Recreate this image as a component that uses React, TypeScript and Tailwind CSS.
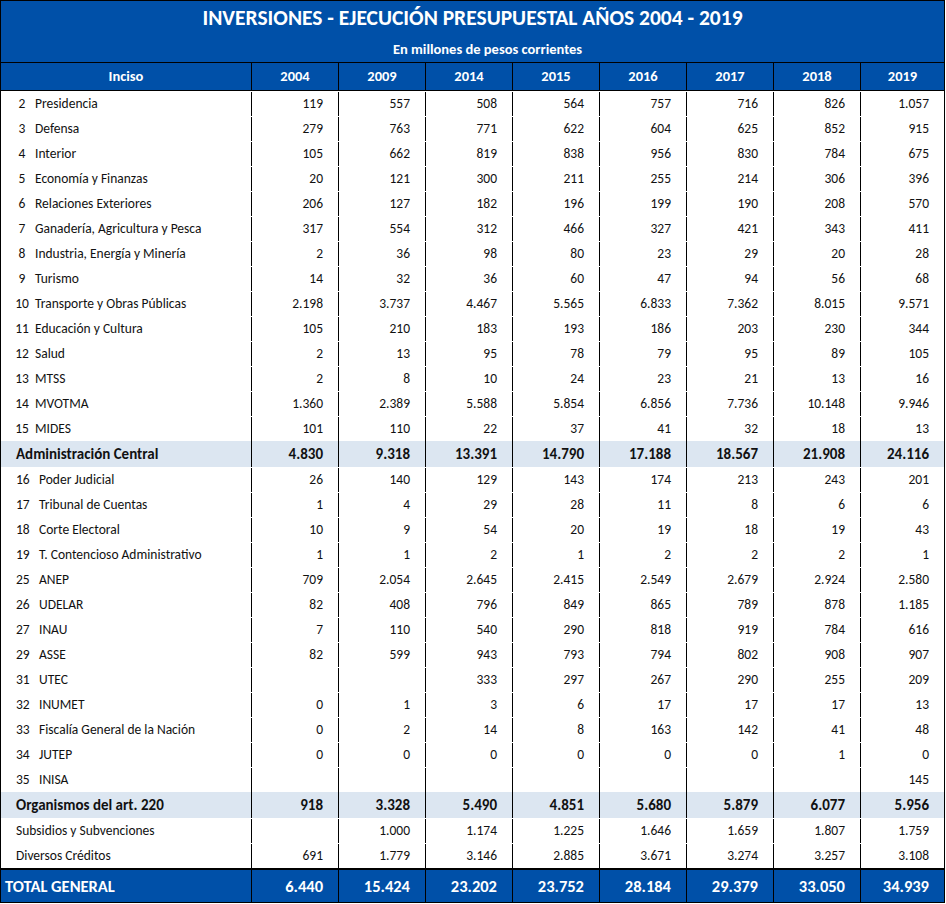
import React from "react";

type Row = { n?: string; name: string; v: string[] };

const sec1: Row[] = [
  { n: "2", name: "Presidencia", v: ["119", "557", "508", "564", "757", "716", "826", "1.057"] },
  { n: "3", name: "Defensa", v: ["279", "763", "771", "622", "604", "625", "852", "915"] },
  { n: "4", name: "Interior", v: ["105", "662", "819", "838", "956", "830", "784", "675"] },
  { n: "5", name: "Economía y Finanzas", v: ["20", "121", "300", "211", "255", "214", "306", "396"] },
  { n: "6", name: "Relaciones Exteriores", v: ["206", "127", "182", "196", "199", "190", "208", "570"] },
  { n: "7", name: "Ganadería, Agricultura y Pesca", v: ["317", "554", "312", "466", "327", "421", "343", "411"] },
  { n: "8", name: "Industria, Energía y Minería", v: ["2", "36", "98", "80", "23", "29", "20", "28"] },
  { n: "9", name: "Turismo", v: ["14", "32", "36", "60", "47", "94", "56", "68"] },
  { n: "10", name: "Transporte y Obras Públicas", v: ["2.198", "3.737", "4.467", "5.565", "6.833", "7.362", "8.015", "9.571"] },
  { n: "11", name: "Educación y Cultura", v: ["105", "210", "183", "193", "186", "203", "230", "344"] },
  { n: "12", name: "Salud", v: ["2", "13", "95", "78", "79", "95", "89", "105"] },
  { n: "13", name: "MTSS", v: ["2", "8", "10", "24", "23", "21", "13", "16"] },
  { n: "14", name: "MVOTMA", v: ["1.360", "2.389", "5.588", "5.854", "6.856", "7.736", "10.148", "9.946"] },
  { n: "15", name: "MIDES", v: ["101", "110", "22", "37", "41", "32", "18", "13"] },
];

const sec2: Row[] = [
  { n: "16", name: "Poder Judicial", v: ["26", "140", "129", "143", "174", "213", "243", "201"] },
  { n: "17", name: "Tribunal de Cuentas", v: ["1", "4", "29", "28", "11", "8", "6", "6"] },
  { n: "18", name: "Corte Electoral", v: ["10", "9", "54", "20", "19", "18", "19", "43"] },
  { n: "19", name: "T. Contencioso Administrativo", v: ["1", "1", "2", "1", "2", "2", "2", "1"] },
  { n: "25", name: "ANEP", v: ["709", "2.054", "2.645", "2.415", "2.549", "2.679", "2.924", "2.580"] },
  { n: "26", name: "UDELAR", v: ["82", "408", "796", "849", "865", "789", "878", "1.185"] },
  { n: "27", name: "INAU", v: ["7", "110", "540", "290", "818", "919", "784", "616"] },
  { n: "29", name: "ASSE", v: ["82", "599", "943", "793", "794", "802", "908", "907"] },
  { n: "31", name: "UTEC", v: ["", "", "333", "297", "267", "290", "255", "209"] },
  { n: "32", name: "INUMET", v: ["0", "1", "3", "6", "17", "17", "17", "13"] },
  { n: "33", name: "Fiscalía General de la Nación", v: ["0", "2", "14", "8", "163", "142", "41", "48"] },
  { n: "34", name: "JUTEP", v: ["0", "0", "0", "0", "0", "0", "1", "0"] },
  { n: "35", name: "INISA", v: ["", "", "", "", "", "", "", "145"] },
];

const years = ["2004", "2009", "2014", "2015", "2016", "2017", "2018", "2019"];
const gridCols = "grid grid-cols-[250px_repeat(7,87px)_84px]";
const font = { fontFamily: "Carlito, Calibri, Lato, 'Open Sans', sans-serif" };

function ValueCells({ v, bold }: { v: string[]; bold?: boolean }) {
  return (
    <>
      {v.map((x, i) => (
        <div
          key={i}
          className={`border-l border-black flex items-center justify-end pr-[15px] ${bold ? "font-bold" : ""}`}
        >
          {x}
        </div>
      ))}
    </>
  );
}

function DataRow({ r, second }: { r: Row; second?: boolean }) {
  return (
    <div className={`${gridCols} h-[25px] text-[13.5px] text-[#111] pt-[1px]`}>
      <div className="flex items-center">
        <span className={`inline-block text-center ${second ? "ml-[15px] w-[12px]" : "ml-[14px] w-[14px]"}`}>{r.n}</span>
        <span className={second ? "ml-[11px]" : "ml-[6px]"}>{r.name}</span>
      </div>
      <ValueCells v={r.v} />
    </div>
  );
}

function TotalRow({ name, v }: { name: string; v: string[] }) {
  return (
    <div className={`${gridCols} h-[26px] bg-[#dce6f1] text-[15px] text-[#111]`}>
      <div className="flex items-center pl-[15px] font-bold">{name}</div>
      <ValueCells v={v} bold />
    </div>
  );
}

function PlainRow({ name, v }: { name: string; v: string[] }) {
  return (
    <div className={`${gridCols} h-[25px] text-[13.5px] text-[#111] pt-[1px]`}>
      <div className="flex items-center pl-[15px]">{name}</div>
      <ValueCells v={v} />
    </div>
  );
}

export default function App() {
  return (
    <div className="bg-white w-[946px] h-[904px]" style={font}>
      <div className="w-[945px] border border-black">
        <div className="bg-[#0050a8] h-[62px] flex flex-col items-center text-white font-bold border-b border-black">
          <div className="text-[21.5px] leading-none mt-[7px]">INVERSIONES - EJECUCIÓN PRESUPUESTAL AÑOS 2004 - 2019</div>
          <div className="text-[14.5px] leading-none mt-[12px] ml-[30px]">En millones de pesos corrientes</div>
        </div>
        <div className={`${gridCols} h-[28px] bg-[#0050a8] text-white font-bold text-[14.5px] border-b border-black`}>
          <div className="flex items-center justify-center">Inciso</div>
          {years.map((y) => (
            <div key={y} className="border-l border-black flex items-center justify-center">
              {y}
            </div>
          ))}
        </div>
        {sec1.map((r) => (
          <DataRow key={r.name} r={r} />
        ))}
        <TotalRow name="Administración Central" v={["4.830", "9.318", "13.391", "14.790", "17.188", "18.567", "21.908", "24.116"]} />
        {sec2.map((r) => (
          <DataRow key={r.name} r={r} second />
        ))}
        <TotalRow name="Organismos del art. 220" v={["918", "3.328", "5.490", "4.851", "5.680", "5.879", "6.077", "5.956"]} />
        <PlainRow name="Subsidios y Subvenciones" v={["", "1.000", "1.174", "1.225", "1.646", "1.659", "1.807", "1.759"]} />
        <PlainRow name="Diversos Créditos" v={["691", "1.779", "3.146", "2.885", "3.671", "3.274", "3.257", "3.108"]} />
        <div className={`${gridCols} h-[34px] bg-[#0050a8] text-white font-bold text-[16.5px] border-t-2 border-black`}>
          <div className="flex items-center pl-[4px]">TOTAL GENERAL</div>
          <ValueCells
            v={["6.440", "15.424", "23.202", "23.752", "28.184", "29.379", "33.050", "34.939"]}
            bold
          />
        </div>
      </div>
    </div>
  );
}
